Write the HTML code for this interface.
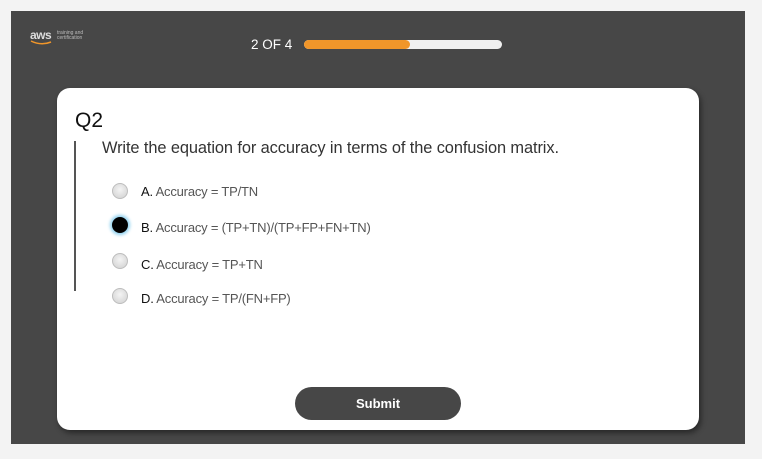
<!DOCTYPE html>
<html><head><style>
body{margin:0;width:762px;height:459px;background:#f3f3f3;font-family:"Liberation Sans",sans-serif;position:relative;overflow:hidden}
.dark{position:absolute;left:11px;top:11px;width:734px;height:433px;background:#474747}
.card{position:absolute;left:57px;top:88px;width:642px;height:342px;background:#fff;border-radius:13px;box-shadow:2px 3px 6px rgba(0,0,0,.45)}
.abs{position:absolute}
.radio{position:absolute;left:112px;width:16px;height:16px;border-radius:50%;background:radial-gradient(circle at 50% 40%,#f4f4f4,#cfcfcf);border:1px solid #bdbdbd;box-sizing:border-box}
.opt{position:absolute;left:141px;font-size:13px;color:#555;letter-spacing:-0.2px}
.opt b{font-weight:normal;color:#111}
</style></head><body>
<div class="dark"></div>
<div class="abs" style="left:30px;top:28px;color:#ddd;font-size:12px;font-weight:bold;letter-spacing:-0.5px">aws</div>
<svg class="abs" style="left:30px;top:40px" width="24" height="6"><path d="M1 1 Q11 6 21 2" stroke="#f0962a" stroke-width="1.5" fill="none"/></svg>
<div class="abs" style="left:57px;top:31px;color:#bbb;font-size:5px;line-height:5px">training and<br>certification</div>
<div class="abs" style="left:251px;top:37px;color:#fff;font-size:13.5px">2 OF 4</div>
<div class="abs" style="left:304px;top:40px;width:198px;height:9px;border-radius:5px;background:#f0f0f0"></div>
<div class="abs" style="left:304px;top:40px;width:106px;height:9px;border-radius:5px;background:#f0962a"></div>
<div class="card"></div>
<div class="abs" style="left:75px;top:109px;font-size:21px;color:#111">Q2</div>
<div class="abs" style="left:74px;top:141px;width:2px;height:150px;background:#555"></div>
<div class="abs" style="left:102px;top:139px;font-size:16.4px;color:#333;letter-spacing:-0.1px">Write the equation for accuracy in terms of the confusion matrix.</div>
<div class="radio" style="top:183px"></div>
<div class="opt" style="top:184px"><b>A.</b> Accuracy = TP/TN</div>
<div class="radio" style="top:217px;background:#000;border:1px solid #000;box-shadow:0 0 3px 2px #8ed0ee"></div>
<div class="opt" style="top:220px"><b>B.</b> Accuracy = (TP+TN)/(TP+FP+FN+TN)</div>
<div class="radio" style="top:253px"></div>
<div class="opt" style="top:257px"><b>C.</b> Accuracy = TP+TN</div>
<div class="radio" style="top:288px"></div>
<div class="opt" style="top:291px"><b>D.</b> Accuracy = TP/(FN+FP)</div>
<div class="abs" style="left:295px;top:387px;width:166px;height:33px;border-radius:17px;background:#474747;color:#fff;font-size:13px;font-weight:bold;text-align:center;line-height:33px">Submit</div>
</body></html>
